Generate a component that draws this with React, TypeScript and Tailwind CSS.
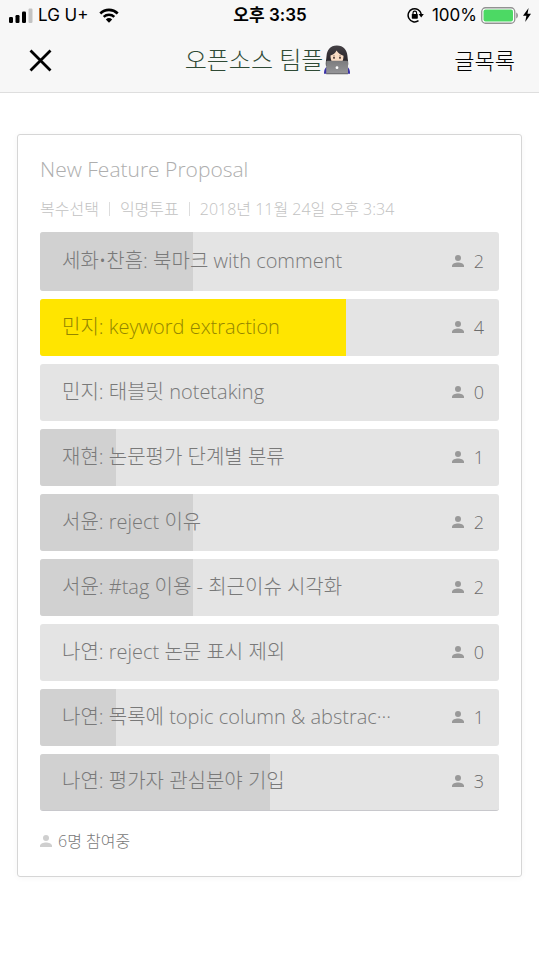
import React from "react";

type Option = { label: string; votes: number; mine?: boolean };

const PARTICIPANTS = 6;

const options: Option[] = [
  { label: "세화•찬흠: 북마크 with comment", votes: 2 },
  { label: "민지: keyword extraction", votes: 4, mine: true },
  { label: "민지: 태블릿 notetaking", votes: 0 },
  { label: "재현: 논문평가 단계별 분류", votes: 1 },
  { label: "서윤: reject 이유", votes: 2 },
  { label: "서윤: #tag 이용 - 최근이슈 시각화", votes: 2 },
  { label: "나연: reject 논문 표시 제외", votes: 0 },
  { label: "나연: 목록에 topic column & abstrac···", votes: 1 },
  { label: "나연: 평가자 관심분야 기입", votes: 3 },
];

function Person({ className }: { className: string }) {
  return (
    <svg viewBox="0 0 12 12" className={className} fill="currentColor" aria-hidden="true">
      <circle cx="6" cy="3" r="3" />
      <path d="M0 12v-1.2C0 8.600 3.500 7.400 6 7.400s6 1.200 6 3.400V12z" />
    </svg>
  );
}

function Signal() {
  return (
    <svg viewBox="0 0 24 15" className="h-[15px] w-6" aria-hidden="true">
      <rect x="0" y="9" width="4" height="6" rx="1.200" />
      <rect x="6.500" y="7" width="4" height="8" rx="1.200" />
      <rect x="13" y="3.500" width="4" height="11.500" rx="1.200" />
      <rect x="19.500" y="0.500" width="4" height="14.500" rx="1.200" fill="#c3c3c3" />
    </svg>
  );
}

function Wifi() {
  return (
    <svg viewBox="0 0 20 15" className="h-[15px] w-5" aria-hidden="true">
      <path d="M1.300 5.400a12.600 12.600 0 0 1 17.400 0" fill="none" stroke="#000" strokeWidth="2.700" />
      <path d="M4.700 8.900a7.700 7.700 0 0 1 10.600 0" fill="none" stroke="#000" strokeWidth="2.500" />
      <path d="M10 14.800l-3.200-3.300a4.800 4.800 0 0 1 6.400 0z" />
    </svg>
  );
}

function RotationLock() {
  return (
    <svg viewBox="0 0 17 16" className="h-4 w-[17px]" aria-hidden="true">
      <path d="M11.500 13.700A6.600 6.600 0 1 1 14.200 7" fill="none" stroke="#000" strokeWidth="1.500" />
      <path d="M11.600 7h5.200l-2.600 3.400z" />
      <rect x="4.800" y="7" width="6" height="4.700" rx="0.600" />
      <path d="M6 7.500V6a1.800 1.800 0 0 1 3.600 0v1.500" fill="none" stroke="#000" strokeWidth="1.200" />
    </svg>
  );
}

function Battery() {
  return (
    <svg viewBox="0 0 38 17" className="h-[17px] w-[38px]" aria-hidden="true">
      <rect x="0.750" y="0.750" width="33" height="15.500" rx="3.800" fill="#fff" stroke="#929292" strokeWidth="1.300" />
      <rect x="2.500" y="2.500" width="29.500" height="12" rx="2" fill="#4cd964" />
      <path d="M35.200 5.500c2.300.8 2.300 5.200 0 6z" fill="#929292" />
    </svg>
  );
}

function Bolt() {
  return (
    <svg viewBox="0 0 8 14" className="h-[14px] w-2" aria-hidden="true">
      <path d="M5.600 0L0 7.800h3.400L2.200 14 8 5.800H4.500z" />
    </svg>
  );
}

function Technologist() {
  return (
    <svg viewBox="0 0 28 30" className="h-[30px] w-7" role="img" aria-label="woman technologist">
      <defs>
        <linearGradient id="lid" x1="0" y1="0" x2="0" y2="1">
          <stop offset="0" stopColor="#7c7c7e" />
          <stop offset="1" stopColor="#97979a" />
        </linearGradient>
        <linearGradient id="hair" x1="0" y1="0" x2="0" y2="1">
          <stop offset="0" stopColor="#454146" />
          <stop offset="1" stopColor="#211d21" />
        </linearGradient>
      </defs>
      <path d="M1 28.800c0-4 1-6.800 5-8.300h16c4 1.500 5 4.300 5 8.300z" fill="#3a31a8" />
      <path d="M14 .5C7.500.300 4 5 3.600 10.500 3.300 15 2.300 18 3 21h22c.7-3-.3-6-.6-10.500C24 5 20.500.700 14 .5z" fill="url(#hair)" />
      <path d="M7.500 10.500C10 9.700 12.500 8 13.500 5.500c2 3 4.500 4.500 7 5.300 0 6-2.500 9.200-6.500 9.200s-6.500-4-6.500-9.500z" fill="#f9dcc4" />
      <ellipse cx="11" cy="12.800" rx="0.900" ry="1.100" fill="#3b2b28" />
      <ellipse cx="17" cy="12.800" rx="0.900" ry="1.100" fill="#3b2b28" />
      <path d="M10 11c.6-.4 1.400-.4 2 0M16 11c.6-.4 1.400-.4 2 0" fill="none" stroke="#6b4e40" strokeWidth="0.500" />
      <rect x="3.200" y="15.800" width="21.800" height="13.200" rx="1" fill="url(#lid)" />
      <rect x="3.200" y="28.200" width="21.800" height="1" rx="0.500" fill="#67676a" />
      <circle cx="14" cy="22.700" r="1.400" fill="#fff" />
    </svg>
  );
}

export default function App() {
  return (
    <div className="min-h-screen bg-white font-['Open_Sans','Noto_Sans_CJK_KR',sans-serif] font-light">
      <header className="border-b border-[#dedede] bg-[#f7f7f7] text-black">
        <div className="grid h-[30px] grid-cols-[1fr_auto_1fr] items-center pr-2 pl-[9px] font-['Inter','Noto_Sans_CJK_KR',sans-serif] text-[17px] leading-6 font-normal">
          <div className="flex items-center">
            <Signal />
            <span className="mr-[10px] ml-[5px]">LG U+</span>
            <Wifi />
          </div>
          <span className="font-semibold">오후 3:35</span>
          <div className="flex items-center justify-end">
            <RotationLock />
            <span className="mr-1 ml-2">100%</span>
            <Battery />
            <span className="ml-1">
              <Bolt />
            </span>
          </div>
        </div>
        <div className="grid h-[62px] grid-cols-[1fr_auto_1fr] items-center pr-6 pb-[2px] pl-[21px]">
          <button type="button" aria-label="닫기" className="justify-self-start p-2">
            <svg viewBox="0 0 23 23" className="size-[23px]" fill="none" stroke="#000" strokeWidth="2.800" aria-hidden="true">
              <path d="M1.500 1.500l20 20M21.500 1.500l-20 20" />
            </svg>
          </button>
          <h1 className="flex items-center text-[24px] leading-8 text-[#2f4a35]">
            오픈소스 팀플
            <Technologist />
          </h1>
          <button type="button" className="justify-self-end text-[22px] leading-8">
            글목록
          </button>
        </div>
      </header>

      <main className="mx-[17px] mt-[41px] rounded-[3px] border border-[#d6d6d6] px-[22px] pt-[19px] pb-[23px] shadow-[0_1px_6px_rgba(0,0,0,0.04)]">
        <h2 className="text-[21px] leading-[30px] text-[#aeaeae]">New Feature Proposal</h2>
        <div className="mt-[13px] mb-[11px] flex items-center text-[16px] leading-6 text-[#c2c2c2]">
          <span>복수선택</span>
          <span className="mx-[10px] h-[14px] w-px bg-[#dddddd]" />
          <span>익명투표</span>
          <span className="mx-[10px] h-[14px] w-px bg-[#dddddd]" />
          <span>2018년 11월 24일 오후 3:34</span>
        </div>
        <ul className="flex flex-col gap-2">
          {options.map((o) => (
            <li
              key={o.label}
              className="relative flex h-[57px] items-center justify-between overflow-hidden rounded-[3px] bg-[#e4e4e4] pr-[15px] pb-[2px] pl-[22px] first:h-[59px] last:border-b last:border-[#c8c8cc]"
            >
              <div
                className={`absolute inset-y-0 left-0 ${o.mine ? "bg-[#ffe500]" : "bg-[#d1d1d1]"}`}
                style={{ width: `${(o.votes / PARTICIPANTS) * 100}%` }}
              />
              <span className={`relative text-[20px] leading-7 whitespace-nowrap ${o.mine ? "text-[#948500]" : "text-[#797979]"}`}>
                {o.label}
              </span>
              <span className="relative flex items-center gap-[10px] text-[18px] leading-7 text-[#6c6c6c]">
                <Person className="size-3 text-[#999999]" />
                {o.votes}
              </span>
            </li>
          ))}
        </ul>
        <p className="mt-[18px] flex items-center gap-[6px] text-[16px] leading-6 text-[#797979]">
          <Person className="size-3 text-[#cfcfcf]" />
          {PARTICIPANTS}명 참여중
        </p>
      </main>
    </div>
  );
}
